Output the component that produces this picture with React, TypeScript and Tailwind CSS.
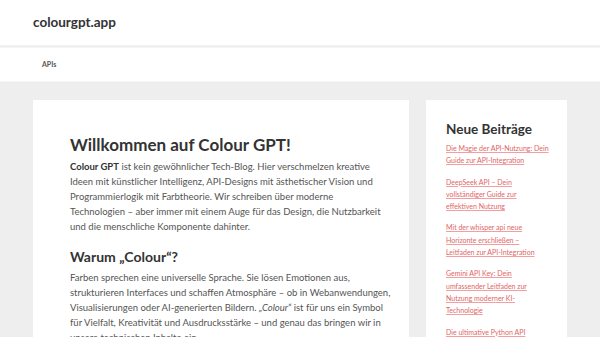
import React from "react";

const font = { fontFamily: "Lato, 'Open Sans', sans-serif" };

export default function App() {
  const links: string[][] = [
    ["Die Magie der API-Nutzung: Dein", "Guide zur API-Integration"],
    ["DeepSeek API – Dein", "vollständiger Guide zur", "effektiven Nutzung"],
    ["Mit der whisper api neue", "Horizonte erschließen –", "Leitfaden zur API-Integration"],
    ["Gemini API Key: Dein", "umfassender Leitfaden zur", "Nutzung moderner KI-", "Technologie"],
    ["Die ultimative Python API", "Anleitung"],
  ];
  return (
    <div className="w-[600px] h-[337px] overflow-hidden bg-[#eeeeee]" style={font}>
      <header className="bg-white h-[46px] border-b border-[#f2f2f2] flex items-center pl-[33px]">
        <span className="text-[13.5px] font-bold text-[#333] leading-none">colourgpt.app</span>
      </header>
      <nav className="bg-white mt-px h-[35px] border-t border-b border-[#f5f5f5] flex items-center pl-[42px]">
        <span className="text-[7px] font-bold text-[#555] leading-none">APIs</span>
      </nav>
      <div className="flex gap-[17px] pl-[33px] pt-[18px]">
        <main className="bg-white w-[376px] h-[300px] pl-[37px] pr-[20px] pt-[35px]">
          <h1 className="text-[17px] leading-[20px] font-bold text-[#333]">Willkommen auf Colour GPT!</h1>
          <p className="mt-[4px] text-[9.5px] leading-[15px] text-[#555] whitespace-nowrap">
            <span className="block"><b className="text-[#333]">Colour GPT</b> ist kein gewöhnlicher Tech-Blog. Hier verschmelzen kreative</span>
            <span className="block">Ideen mit künstlicher Intelligenz, API-Designs mit ästhetischer Vision und</span>
            <span className="block">Programmierlogik mit Farbtheorie. Wir schreiben über moderne</span>
            <span className="block">Technologien – aber immer mit einem Auge für das Design, die Nutzbarkeit</span>
            <span className="block">und die menschliche Komponente dahinter.</span>
          </p>
          <h2 className="mt-[14px] text-[14px] leading-[18px] font-bold text-[#333]">Warum „Colour“?</h2>
          <p className="mt-[3.5px] text-[9.5px] leading-[15px] text-[#555] whitespace-nowrap">
            <span className="block">Farben sprechen eine universelle Sprache. Sie lösen Emotionen aus,</span>
            <span className="block">strukturieren Interfaces und schaffen Atmosphäre – ob in Webanwendungen,</span>
            <span className="block">Visualisierungen oder AI-generierten Bildern. <i>„Colour“</i> ist für uns ein Symbol</span>
            <span className="block">für Vielfalt, Kreativität und Ausdrucksstärke – und genau das bringen wir in</span>
            <span className="block">unsere technischen Inhalte ein.</span>
          </p>
        </main>
        <aside className="bg-white w-[141px] h-[300px] pl-[20px] pt-[20px]">
          <h2 className="text-[13.5px] leading-[18px] font-bold text-[#333]">Neue Beiträge</h2>
          <ul className="mt-[4px] flex flex-col gap-[9px]">
            {links.map((l, i) => (
              <li key={i} className="text-[7px] leading-[12.3px] text-[#e26464] underline decoration-[#f0a0a0] whitespace-nowrap">
                {l.map((s, j) => (
                  <span key={j} className="block">{s}</span>
                ))}
              </li>
            ))}
          </ul>
        </aside>
      </div>
    </div>
  );
}
